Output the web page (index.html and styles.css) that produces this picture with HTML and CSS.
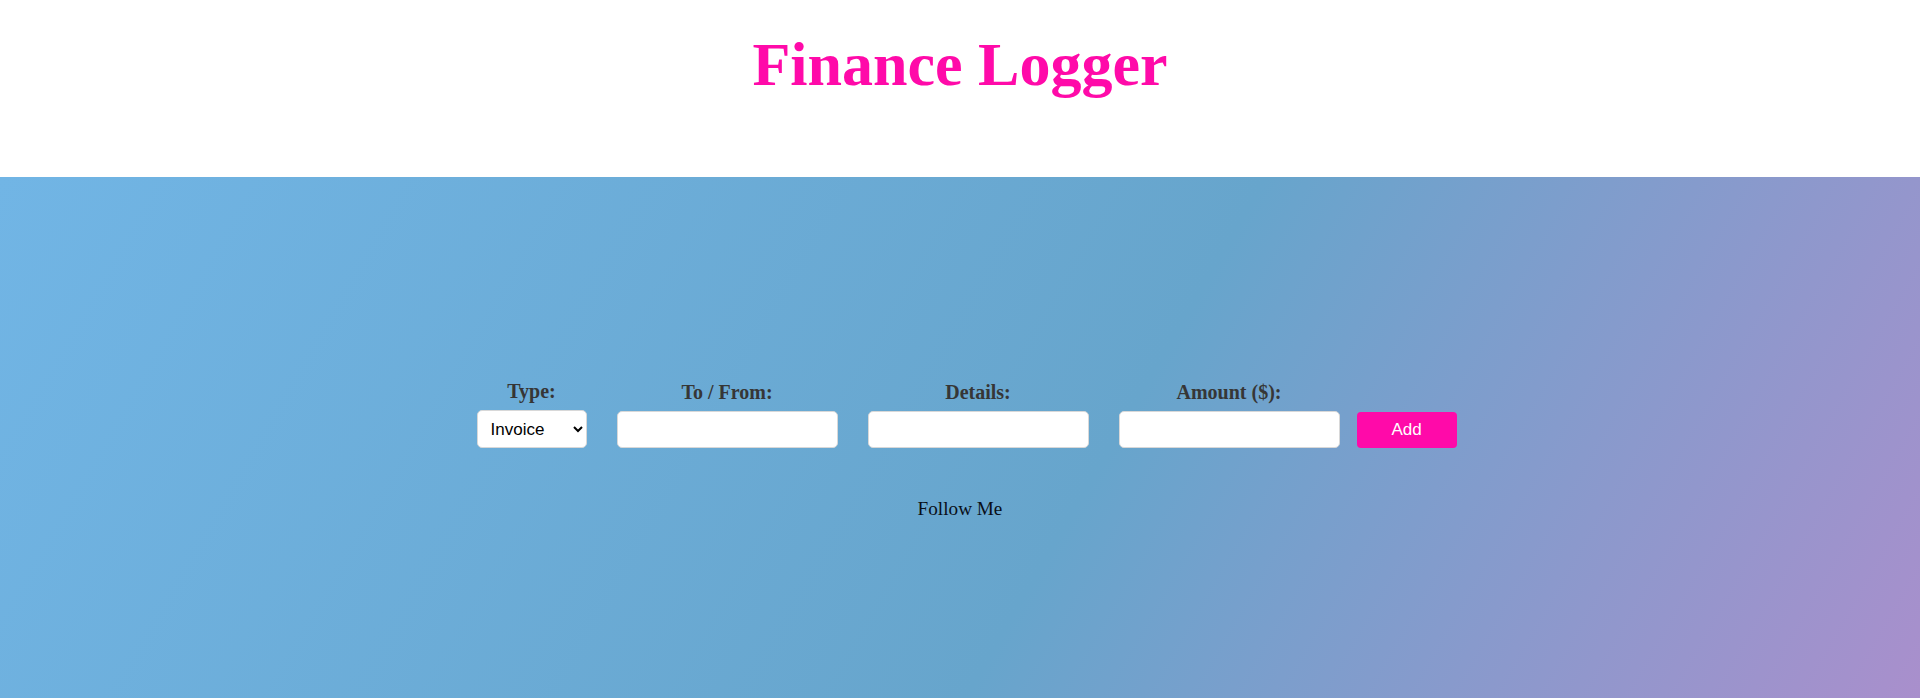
FILE: index.html
```html
<!DOCTYPE html>
<html lang="en">
<head>
<meta charset="utf-8">
<title>Finance Logger</title>
<link rel="stylesheet" href="styles.css">
</head>
<body>
<header class="top">
  <h1 class="title">Finance Logger</h1>
</header>
<main class="wrapper">
  <form class="new-item-form">
    <div class="field">
      <label class="field-label">Type:</label>
      <select class="field-select">
        <option>Invoice</option>
        <option>Payment</option>
      </select>
    </div>
    <div class="field">
      <label class="field-label">To / From:</label>
      <input class="field-input" type="text">
    </div>
    <div class="field">
      <label class="field-label">Details:</label>
      <input class="field-input" type="text">
    </div>
    <div class="field">
      <label class="field-label">Amount ($):</label>
      <input class="field-input" type="number">
    </div>
    <button class="add-btn" type="button">Add</button>
  </form>
  <footer class="footer">Follow Me</footer>
</main>
</body>
</html>
```
FILE: styles.css
```css
html, body {
  margin: 0;
  padding: 0;
}
body {
  font-family: "Liberation Serif", "Times New Roman", serif;
  background: #fff;
  overflow: hidden;
}
.top {
  box-sizing: border-box;
  height: 177px;
  padding-top: 33px;
  background: #fff;
  text-align: center;
}
.title {
  margin: 0;
  font-size: 62px;
  line-height: 1;
  font-weight: bold;
  color: #ff0aa9;
}
.wrapper {
  box-sizing: border-box;
  height: 521px;
  padding-top: 203px;
  background: linear-gradient(120deg, #71b5e5 0%, #67a5cc 57%, #a98fcc 100%);
}
.new-item-form {
  display: flex;
  justify-content: center;
  align-items: flex-end;
  padding-right: 2px;
}
.field {
  display: flex;
  flex-direction: column;
  align-items: center;
  margin: 0 15px;
}
.field-label {
  display: block;
  font-size: 20px;
  line-height: 23px;
  font-weight: bold;
  color: #363636;
  margin-bottom: 7px;
}
.field-select {
  box-sizing: border-box;
  width: 110px;
  height: 38px;
  padding: 0 4px 0 9px;
  border: 1px solid #d8d8d8;
  border-radius: 5px;
  background: #fff;
  font-family: "Liberation Sans", Arial, sans-serif;
  font-size: 17px;
  color: #000;
}
.field-input {
  box-sizing: border-box;
  width: 221px;
  height: 37px;
  padding: 0 10px;
  border: 1px solid #d8d8d8;
  border-radius: 5px;
  background: #fff;
  font-size: 16px;
}
.add-btn {
  box-sizing: border-box;
  width: 100px;
  height: 36px;
  margin-left: 2px;
  border: none;
  border-radius: 4px;
  background: #ff0aa9;
  color: #fff;
  font-family: "Liberation Sans", Arial, sans-serif;
  font-size: 17px;
}
.footer {
  margin-top: 50px;
  text-align: center;
  font-size: 19.2px;
  color: #0a0f18;
}
```
